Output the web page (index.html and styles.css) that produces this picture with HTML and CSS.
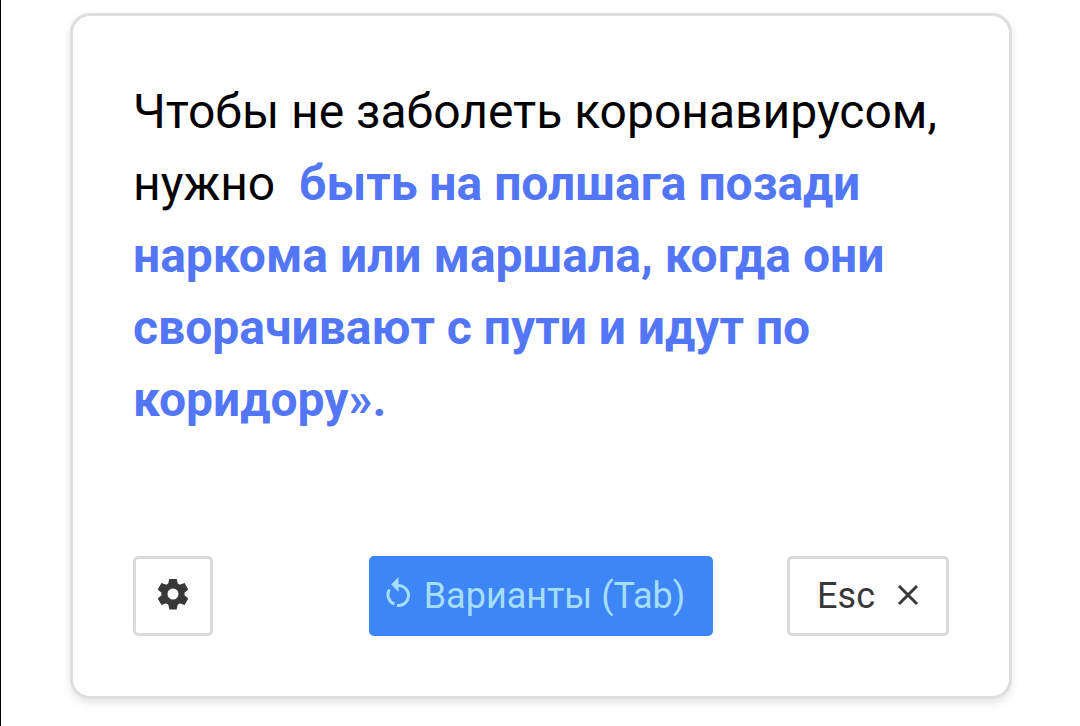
FILE: index.html
```html
<!DOCTYPE html>
<html lang="ru">
<head>
    <meta charset="UTF-8">
    <meta name="viewport" content="width=device-width, initial-scale=1.0">
    <title>Генератор текста</title>
    <link rel="stylesheet" href="styles.css">
</head>
<body>
    <main class="card">
        <p class="text">Чтобы не заболеть коронавирусом, нужно&nbsp; <span class="generated">быть на полшага позади наркома или маршала, когда они сворачивают с пути и идут по коридору».</span></p>

        <div class="actions">
            <button class="btn btn-settings" type="button" aria-label="Настройки">
                <svg class="icon-gear" viewBox="-16 -15 32 34" aria-hidden="true">
                    <circle class="gear-body" r="8.500"/>
                    <path id="tooth" d="M-5-9l1.300-6.500h7.400L5-9zM-5 9l1.300 6.500h7.400L5 9z"/>
                    <use href="#tooth" transform="rotate(60)"/>
                    <use href="#tooth" transform="rotate(120)"/>
                </svg>
            </button>
            <button class="btn btn-variants" type="button">
                <svg class="icon-reload" viewBox="0 0 26 38" aria-hidden="true">
                    <path class="ring" d="M12 8.500a10 10 0 0 1 1 20q-1 0-2-.2M8.500 27.200A10 10 0 0 1 3.500 12.500"/>
                    <path class="arrow" d="M12.500 0v15L5.200 7.500z"/>
                </svg>
                Варианты (Tab)
            </button>
            <button class="btn btn-close" type="button">
                Esc
                <svg class="icon-close" viewBox="0 0 22 24" aria-hidden="true">
                    <path d="M2 2l18 18M20 2L2 20"/>
                </svg>
            </button>
        </div>
    </main>
</body>
</html>
```
FILE: styles.css
```css
* {
    margin: 0;
    padding: 0;
    box-sizing: border-box;
}

body {
    font-family: Roboto, sans-serif;
    background: #fff;
    color: #000;
    min-height: 100vh;
    padding: 13px 68px 24px 69px;
    border-left: 1px solid #000;
}

.card {
    border: 3px solid #dedede;
    border-radius: 20px;
    padding: 60px;
    box-shadow: 0 4px 8px rgba(0, 0, 0, 0.1);
}

.text {
    font-size: 48px;
    line-height: 72px;
    margin-bottom: 120px;
}

.generated {
    font-weight: bold;
    color: #5276f5;
}

.actions {
    display: grid;
    grid-template-columns: 1fr auto 1fr;
    align-items: center;
}

.btn {
    display: flex;
    align-items: center;
    justify-content: center;
    height: 80px;
    font-family: inherit;
    font-size: 36px;
    color: #383838;
    background: #fff;
    border: 3px solid #dbdbdb;
    border-radius: 5px;
    cursor: pointer;
}

.btn-settings {
    width: 80px;
}

.btn-variants {
    gap: 12px;
    padding: 0 28px 0 17px;
    color: #a5def8;
    background: #3e86f5;
    border: none;
}

.btn-close {
    justify-self: end;
    gap: 22px;
    padding: 0 27px;
}

.icon-gear {
    width: 32px;
    height: 34px;
    fill: #383838;
}

.gear-body {
    fill: none;
    stroke: #383838;
    stroke-width: 6;
}

.icon-reload {
    width: 26px;
    height: 38px;
}

.ring {
    fill: none;
    stroke: #a5def8;
    stroke-width: 3;
}

.arrow {
    fill: #a5def8;
}

.icon-close {
    width: 22px;
    height: 24px;
    fill: none;
    stroke: #383838;
    stroke-width: 3;
}
```
